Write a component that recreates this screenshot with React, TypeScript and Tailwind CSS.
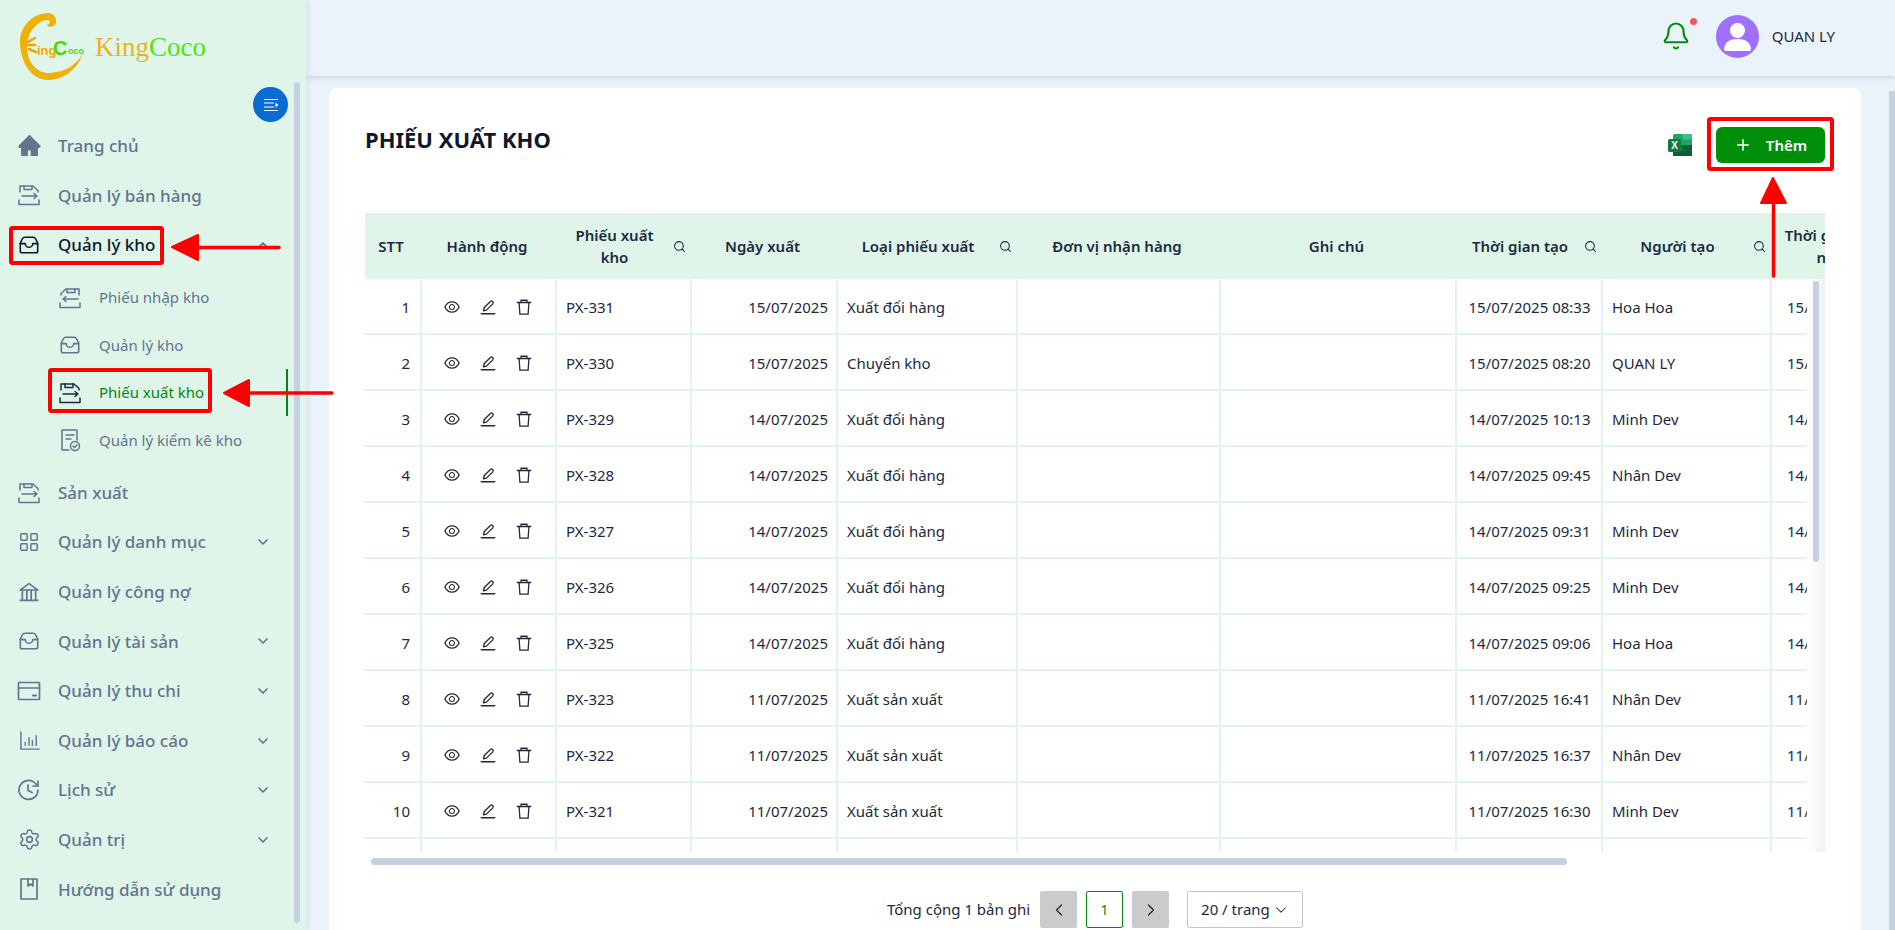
import React from 'react';
import { Bell, ChevronDown, ChevronLeft, ChevronRight, ChevronUp, LayoutGrid, Plus, Search, Settings } from 'lucide-react';
import { AiFillHome, AiOutlineBank, AiOutlineEye } from 'react-icons/ai';

const Stroke: React.FC<{ size?: number; width?: number; children: React.ReactNode }> = ({ size = 20, width = 1.7, children }) => (
  <svg width={size} height={size} viewBox="0 0 24 24" fill="none" stroke="currentColor" strokeWidth={width} strokeLinecap="round" strokeLinejoin="round">
    {children}
  </svg>
);

const InboxIcon = () => (
  <Stroke size={22} width={1.7}>
    <path d="M7.5 3.5h9a3 3 0 0 1 2.7 1.7L21.5 10v8.5a2 2 0 0 1-2 2h-15a2 2 0 0 1-2-2V10l2.3-4.8a3 3 0 0 1 2.7-1.7z" />
    <path d="M2.5 10.5h5.5a4 4 0 0 0 8 0h5.5" />
  </Stroke>
);

const ExportIcon = () => (
  <Stroke size={24} width={1.5}>
    <path d="M3 9V3h13l5 4.5V9" />
    <path d="M7 3v3.5h8V3" />
    <path d="M5 13h15M17 10.5l3 2.5-3 2.5" />
    <path d="M2 17v4.5h20V17" />
  </Stroke>
);

const ImportIcon = () => (
  <Stroke size={24} width={1.5}>
    <path d="M3 9V7.5L8 3h13v6" />
    <path d="M9 3v3.5h8V3" />
    <path d="M20 13H5M8 10.5L5 13l3 2.5" />
    <path d="M2 17v4.5h20V17" />
  </Stroke>
);

const CheckDocIcon = () => (
  <Stroke size={24} width={1.5}>
    <path d="M11 22H4V2h15v10" />
    <path d="M8 7h8M8 11h5" />
    <circle cx="17" cy="18" r="4.5" />
    <path d="M15 18l1.5 1.5L19 17" />
  </Stroke>
);

const CardIcon = () => (
  <Stroke size={24}>
    <rect x="1.5" y="3.5" width="21" height="17" rx="0.5" />
    <path d="M1.5 9h21" />
    <path d="M16 16.5h3" strokeWidth={2} />
  </Stroke>
);

const ChartIcon = () => (
  <Stroke size={23} width={1.5}>
    <path d="M3 3v18h19" />
    <path d="M7.5 17v-3M11.5 17V9M15 17v-5M19 17V7" />
  </Stroke>
);

const HistoryIcon = () => (
  <Stroke size={24}>
    <path d="M21 12a9.5 9.5 0 1 1-3-7l3 3" />
    <path d="M21 3v5h-5" />
    <path d="M11 7v5.5l4 2" />
  </Stroke>
);

const BookIcon = () => (
  <Stroke size={24}>
    <path d="M4 2h16v20H4z" />
    <path d="M11 2v7l2.5-2 2.5 2V2" />
  </Stroke>
);

const PenIcon = () => (
  <Stroke size={18}>
    <path d="M3 21h18" />
    <path d="M6 17l.8-4L15.5 4.3a1.5 1.5 0 0 1 2.1 0l1.1 1.1a1.5 1.5 0 0 1 0 2.1L10 16.2z" />
  </Stroke>
);

const TrashIcon = () => (
  <Stroke size={18}>
    <path d="M3 6h18" />
    <path d="M8 6V3h8v3" />
    <path d="M5.5 6l1 15.5h11l1-15.5" />
  </Stroke>
);

const Logo = () => (
  <svg width="100" height="80" viewBox="0 0 100 80">
    <path
      d="M73 48C68 65 52 75 38 75C20 75 10 55 10 37C10 20 24 8 38 8C44 8 47 13 46 18C45 22 39 23 37 20C40 19 41 16 38 15C28 15 17 27 17 42C17 58 28 69 40 68C55 67 67 60 73 48Z"
      fill="#f0b00a"
    />
    <path d="M18 37l7-4M18 40h7M19 44l7 3" stroke="#f0a500" strokeWidth={2.5} strokeLinecap="round" />
    <text x="27" y="50" fontFamily="'Liberation Sans',sans-serif" fontWeight={700} fontSize="13" fill="#eea70a">ing</text>
    <text x="43" y="50" fontFamily="'Liberation Sans',sans-serif" fontWeight={700} fontSize="20" fill="#3fe000">C</text>
    <text x="58" y="49" fontFamily="'Liberation Sans',sans-serif" fontWeight={700} fontSize="9" fill="#4fd80a">oco</text>
  </svg>
);

const Chevron = ({ up }: { up?: boolean }) => (
  <span className="ml-auto mr-[17px] text-slate-500">{up ? <ChevronUp size={16} strokeWidth={2.5} /> : <ChevronDown size={16} strokeWidth={2.5} />}</span>
);

const NavItem: React.FC<{ icon: React.ReactNode; label: string; more?: boolean; active?: boolean }> = ({ icon, label, more, active }) => (
  <div className={`flex h-[49.6px] w-[288px] items-center text-[17px] font-medium ${active ? 'text-slate-900' : 'text-slate-500'}`}>
    <span className="flex w-[58px] shrink-0 justify-center">{icon}</span>
    <span>{label}</span>
    {more && <Chevron up={active} />}
  </div>
);

const SubItem: React.FC<{ icon: React.ReactNode; label: string; active?: boolean }> = ({ icon, label, active }) => (
  <div className={`flex h-[47.5px] w-[288px] items-center text-[15px] ${active ? 'border-r-2 border-[#008a0e] text-[#008a0e]' : 'text-slate-500'}`}>
    <span className={`ml-[58px] flex w-[24px] shrink-0 justify-center ${active ? 'text-slate-800' : ''}`}>{icon}</span>
    <span className="ml-[17px]">{label}</span>
  </div>
);

const Sidebar = () => (
  <aside className="relative z-10 h-full w-[306px] shrink-0 overflow-hidden bg-[#dff5ea] shadow-[2px_0_6px_rgba(100,116,139,0.15)]">
    <div className="flex h-[82px] items-start pl-[10px] pt-[5px]">
      <Logo />
      <span className="ml-[-15px] mt-[24px] font-['Liberation_Serif',serif] text-[27px] leading-9">
        <span className="text-[#efb01f]">King</span>
        <span className="text-[#4ce80a]">Coco</span>
      </span>
    </div>
    <div className="mr-[18px] mt-[5px] flex justify-end">
      <div className="flex h-[35px] w-[35px] items-center justify-center rounded-full bg-[#0a6bd1]">
        <svg width="16" height="14" viewBox="0 0 16 14" fill="none" stroke="#fff" strokeWidth={1.2}>
          <path d="M1 1.5h14M1 5h10M1 9h10M1 12.5h14" />
          <path d="M12.5 4.5l3 2.5-3 2.5z" fill="#fff" stroke="none" />
        </svg>
      </div>
    </div>
    <nav className="mt-[-1px]">
      <NavItem icon={<AiFillHome size={25} />} label="Trang chủ" />
      <NavItem icon={<ExportIcon />} label="Quản lý bán hàng" />
      <NavItem icon={<InboxIcon />} label="Quản lý kho" more active />
      <div className="py-[4px]">
        <SubItem icon={<ImportIcon />} label="Phiếu nhập kho" />
        <SubItem icon={<InboxIcon />} label="Quản lý kho" />
        <SubItem icon={<ExportIcon />} label="Phiếu xuất kho" active />
        <SubItem icon={<CheckDocIcon />} label="Quản lý kiểm kê kho" />
      </div>
      <NavItem icon={<ExportIcon />} label="Sản xuất" />
      <NavItem icon={<LayoutGrid size={22} strokeWidth={1.6} />} label="Quản lý danh mục" more />
      <NavItem icon={<AiOutlineBank size={24} />} label="Quản lý công nợ" />
      <NavItem icon={<InboxIcon />} label="Quản lý tài sản" more />
      <NavItem icon={<CardIcon />} label="Quản lý thu chi" more />
      <NavItem icon={<ChartIcon />} label="Quản lý báo cáo" more />
      <NavItem icon={<HistoryIcon />} label="Lịch sử" more />
      <NavItem icon={<Settings size={23} strokeWidth={1.6} />} label="Quản trị" more />
      <NavItem icon={<BookIcon />} label="Hướng dẫn sử dụng" />
    </nav>
    <div className="absolute right-[6px] top-[82px] h-[841px] w-[6px] rounded-full bg-[#c4d1e0]" />
  </aside>
);

const TopBar = () => (
  <header className="z-[5] flex h-[76px] shrink-0 items-center justify-end bg-[#ebf3fa] pb-[4px] pr-[60px] shadow-[0_2px_5px_rgba(100,116,139,0.22)]">
    <span className="relative mr-[25px] text-[#008a0e]">
      <Bell size={30} strokeWidth={1.7} />
      <span className="absolute right-[-6px] top-[-3px] h-[7px] w-[7px] rounded-full bg-[#ff5252]" />
    </span>
    <span className="relative flex h-[43px] w-[43px] items-center justify-center overflow-hidden rounded-full bg-[#9f70fd]">
      <svg width="43" height="43" viewBox="0 0 43 43" fill="#fff">
        <circle cx="21.5" cy="15.5" r="7.5" />
        <path d="M8 35c0-8 6-11 13.5-11S35 27 35 35c0 .5-2 1-3 1H11c-1 0-3-.5-3-1z" />
      </svg>
    </span>
    <span className="ml-[13px] text-[15px] text-slate-800">QUAN LY</span>
  </header>
);

const ExcelIcon = () => (
  <svg width="26" height="24" viewBox="0 0 26 24">
    <rect x="6" y="1" width="19" height="22" rx="1.5" fill="#21a366" />
    <rect x="15.5" y="1" width="9.5" height="5.5" fill="#33c481" />
    <rect x="6" y="12" width="9.5" height="5.5" fill="#107c41" />
    <rect x="15.5" y="12" width="9.5" height="5.5" fill="#185c37" />
    <rect x="6" y="17.5" width="19" height="5.5" fill="#0f5c33" />
    <rect x="1" y="6" width="13" height="13" rx="1.5" fill="#107c41" />
    <text x="7.5" y="16" textAnchor="middle" fontFamily="'Liberation Sans',sans-serif" fontWeight={700} fontSize="10" fill="#fff">X</text>
  </svg>
);

const widths = [57, 135, 135, 146, 180, 203, 236, 146, 169, 128];

const headers: { label: string; search?: boolean }[] = [
  { label: 'STT' },
  { label: 'Hành động' },
  { label: 'Phiếu xuất kho', search: true },
  { label: 'Ngày xuất' },
  { label: 'Loại phiếu xuất', search: true },
  { label: 'Đơn vị nhận hàng' },
  { label: 'Ghi chú' },
  { label: 'Thời gian tạo', search: true },
  { label: 'Người tạo', search: true },
  { label: 'Thời gian cập nhật' },
];

const rows = [
  ['PX-331', '15/07/2025', 'Xuất đổi hàng', '15/07/2025 08:33', 'Hoa Hoa'],
  ['PX-330', '15/07/2025', 'Chuyển kho', '15/07/2025 08:20', 'QUAN LY'],
  ['PX-329', '14/07/2025', 'Xuất đổi hàng', '14/07/2025 10:13', 'Minh Dev'],
  ['PX-328', '14/07/2025', 'Xuất đổi hàng', '14/07/2025 09:45', 'Nhân Dev'],
  ['PX-327', '14/07/2025', 'Xuất đổi hàng', '14/07/2025 09:31', 'Minh Dev'],
  ['PX-326', '14/07/2025', 'Xuất đổi hàng', '14/07/2025 09:25', 'Minh Dev'],
  ['PX-325', '14/07/2025', 'Xuất đổi hàng', '14/07/2025 09:06', 'Hoa Hoa'],
  ['PX-323', '11/07/2025', 'Xuất sản xuất', '11/07/2025 16:41', 'Nhân Dev'],
  ['PX-322', '11/07/2025', 'Xuất sản xuất', '11/07/2025 16:37', 'Nhân Dev'],
  ['PX-321', '11/07/2025', 'Xuất sản xuất', '11/07/2025 16:30', 'Minh Dev'],
  ['PX-320', '11/07/2025', 'Xuất sản xuất', '11/07/2025 16:22', 'Minh Dev'],
];

const Cols = () => (
  <colgroup>
    {widths.map((w, i) => (
      <col key={i} style={{ width: w }} />
    ))}
  </colgroup>
);

const cell = 'h-[56px] border-b-2 border-r-2 border-[#e0f5ee] pl-[9px] pr-[8px] pt-[2px] whitespace-nowrap';

const DataTable = () => (
  <div className="w-[1460px]">
    <div className="overflow-hidden">
      <table className="w-[1535px] table-fixed border-collapse text-[15px] text-slate-800">
        <Cols />
        <thead>
          <tr className="h-[66px] bg-[#dff5ea]">
            {headers.map((h) => (
              <th key={h.label} className="p-0 font-semibold">
                <div className="flex items-center pr-[5px]">
                  <span className="flex-1 px-[10px] text-center leading-[22px]">{h.label}</span>
                  {h.search && <Search size={13} strokeWidth={2} className="mx-[1px] shrink-0" />}
                </div>
              </th>
            ))}
          </tr>
        </thead>
      </table>
    </div>
    <div className="flex h-[573px]">
      <div className="w-[1442px] overflow-hidden">
        <table className="w-[1535px] table-fixed border-separate border-spacing-0 text-[15px] text-slate-800">
          <Cols />
          <tbody>
            {rows.map((r, i) => (
              <tr key={r[0]}>
                <td className={`${cell} pr-[10px] text-right`}>{i + 1}</td>
                <td className={cell}>
                  <div className="flex items-center justify-center gap-[18px] pr-[2px]">
                    <AiOutlineEye size={18} />
                    <PenIcon />
                    <TrashIcon />
                  </div>
                </td>
                <td className={cell}>{r[0]}</td>
                <td className={`${cell} text-right`}>{r[1]}</td>
                <td className={cell}>{r[2]}</td>
                <td className={cell} />
                <td className={cell} />
                <td className={`${cell} text-center`}>{r[3]}</td>
                <td className={cell}>{r[4]}</td>
                <td className={`${cell} pl-[15px]`}>{r[3]}</td>
              </tr>
            ))}
          </tbody>
        </table>
      </div>
      <div className="w-[18px] bg-gradient-to-r from-white to-[#f1f1f1] px-[6px] pt-[2px]">
        <div className="h-[281px] w-[6px] rounded-full bg-[#c4d1e0]" />
      </div>
    </div>
    <div className="mt-[6px] h-[7px] pl-[6px]">
      <div className="h-full w-[1196px] rounded-full bg-[#c4d1e0]" />
    </div>
  </div>
);

const Pager = () => (
  <div className="mt-[26px] flex w-[1460px] items-center justify-center text-[15px] text-slate-800">
    <span className="mr-[10px]">Tổng cộng 1 bản ghi</span>
    <span className="flex h-[37px] w-[37px] items-center justify-center rounded-[2px] bg-[#cbcbcb]">
      <ChevronLeft size={20} strokeWidth={1.5} />
    </span>
    <span className="ml-[9px] flex h-[37px] w-[37px] items-center justify-center rounded-[2px] border border-[#008a0e] text-sm text-[#008a0e]">1</span>
    <span className="ml-[9px] flex h-[37px] w-[37px] items-center justify-center rounded-[2px] bg-[#cbcbcb]">
      <ChevronRight size={20} strokeWidth={1.5} />
    </span>
    <span className="ml-[18px] flex h-[37px] w-[116px] items-center justify-between rounded-[2px] border border-[#c4c4c8] pl-[13px] pr-[12px]">
      20 / trang
      <ChevronDown size={18} strokeWidth={1.4} />
    </span>
  </div>
);

const Annotations = () => (
  <svg className="pointer-events-none absolute inset-0 z-20" width="1895" height="930" viewBox="0 0 1895 930" fill="none">
    <rect x="11" y="228" width="151" height="35" rx="1.5" stroke="#fe0000" strokeWidth="4" />
    <rect x="50" y="370" width="160" height="41" rx="1.5" stroke="#fe0000" strokeWidth="4" />
    <rect x="1709" y="119" width="123" height="50" rx="1.5" stroke="#fe0000" strokeWidth="4" />
    <g stroke="#fe0000" strokeWidth="3.5" strokeLinecap="round" strokeLinejoin="round" fill="#fe0000">
      <path d="M199 247.5H279" />
      <path d="M172 247L198 235V260Z" strokeWidth="2" />
      <path d="M250 393H332" />
      <path d="M224 393L249 380V406Z" strokeWidth="2" />
      <path d="M1773.5 204V276" />
      <path d="M1773 178L1761 203H1786Z" strokeWidth="2" />
    </g>
  </svg>
);

export default function App() {
  return (
    <div className="relative flex h-screen w-full overflow-hidden bg-[#ebf3fa] font-['Noto_Sans',sans-serif]">
      <Sidebar />
      <div className="flex min-w-0 flex-1 flex-col">
        <TopBar />
        <div className="flex min-h-0 flex-1">
          <main className="ml-[23px] mt-[12px] h-[900px] w-[1532px] shrink-0 rounded-t-lg bg-white pl-[36px] pt-[39px]">
            <div className="flex h-[86px] w-[1460px] items-start justify-between">
              <h1 className="mt-[-2px] text-[22px] font-bold leading-7 text-slate-900">PHIẾU XUẤT KHO</h1>
              <div className="flex items-center">
                <ExcelIcon />
                <button className="ml-[23px] flex h-[36px] w-[109px] items-center justify-center gap-[14px] rounded-md bg-[#008f0a] text-[15px] font-semibold text-white">
                  <Plus size={18} strokeWidth={2} />
                  Thêm
                </button>
              </div>
            </div>
            <DataTable />
            <Pager />
          </main>
          <div className="ml-auto mt-[15px] h-[900px] w-[6px] bg-[#c4d1e0]" />
        </div>
      </div>
      <Annotations />
    </div>
  );
}
